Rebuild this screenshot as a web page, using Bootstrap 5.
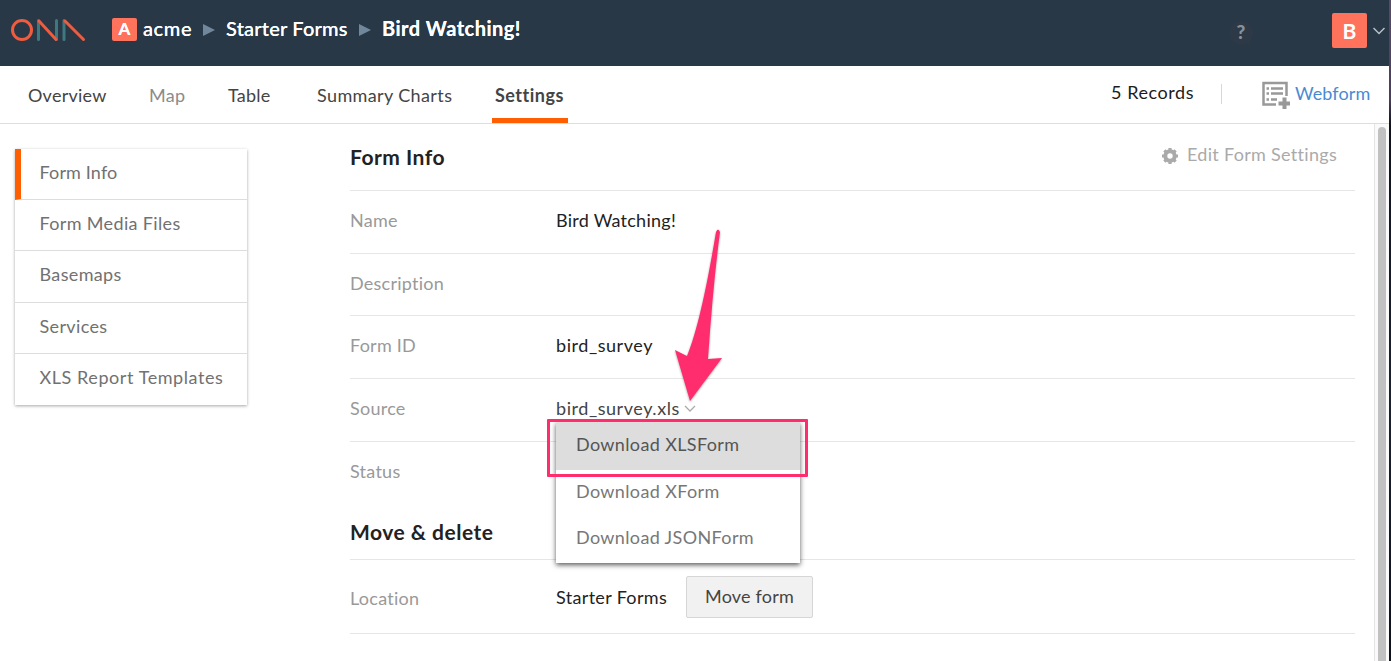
<!DOCTYPE html>
<html lang="en">
<head>
<meta charset="utf-8">
<title>Bird Watching! – Settings</title>
<link href="https://cdn.jsdelivr.net/npm/bootstrap@5.3.0/dist/css/bootstrap.min.css" rel="stylesheet">
<style>
body{font-family:Lato,"Liberation Sans",sans-serif;font-size:18px;line-height:24px;letter-spacing:.25px;font-variant-ligatures:none;color:#222;background:#fff;overflow:hidden;height:661px}
a{text-decoration:none;color:inherit}
.window{width:1389px;height:661px}
.desktop-edge{width:2px;background:linear-gradient(#5a4a68 0,#4b3d5c 100px,#10131e 125px,#1b2130 400px,#0d111c)}
.topbar{height:66px;background:#293847;color:#fff;padding:0 4px 0 10px}
.brand{width:76px;height:24px;margin-top:-7px}
.brand,.topbar svg{flex-shrink:0}
.crumbs{height:24px;margin:-10px 0 0 26px;font-size:20px;font-weight:500;letter-spacing:.2px;white-space:nowrap;text-shadow:0 0 .5px #fff}
.crumbs svg{position:relative;top:2px}
.tile{background:#ff735c;color:#fff;font-weight:700;border-radius:2px;letter-spacing:0;display:flex;align-items:center;justify-content:center;flex-shrink:0}
.tile-sm{width:25px;height:23px;font-size:17px;margin:2px 6px 0 0}
.tile-lg{width:35px;height:35px;font-size:21px;margin:-5px 6px 0 78px}
.crumb-org{width:60px;letter-spacing:.6px}
.crumb-project{width:144px;padding-left:11px}
.crumb-form{padding-left:11px;letter-spacing:.5px}
.tabbar{height:58px;border-bottom:1px solid #ddd;padding:0 17px 0 25px}
.tabs{gap:37px;height:57px}
.tabs a{padding:17px 3px 0;color:#444;border-bottom:5px solid transparent;white-space:nowrap;height:57px}
.tabs a.on{font-weight:700;letter-spacing:.5px;border-color:#ff5f00}
.w1{width:84px}.w2{width:42px}.w3{width:52px}.w4{width:141px;letter-spacing:.38px}.w5{width:76px}
.records{margin-top:-5px;letter-spacing:.55px;color:#1c1c1c}
.divide{width:1px;height:20px;background:#d8d8d8;margin:-2px 40px 0 27px}
.webform{color:#4a8ad4;margin:-4px 0 0 5px;width:77px;letter-spacing:.1px}
.sidemenu{width:232px;margin:25px 0 0 15px;box-shadow:0 1px 3px rgba(0,0,0,.35);color:#717171;height:256px;letter-spacing:.35px}
.sidemenu a{height:51.3px;padding:11px 0 0 24.5px;border-bottom:1px solid #ddd;white-space:nowrap}
.sidemenu a.on{border-left:6px solid #ff5f00;padding-left:18.5px;letter-spacing:.15px}
.sidemenu a:last-child{border-bottom:0;letter-spacing:.57px}
.info{width:1005px;margin-left:103px}
.line{border-bottom:1px solid #e6e6e6;height:63px;position:relative;display:flex}
.line>*{padding-top:17px;white-space:nowrap}
.short{height:62px}
.short>*{padding-top:16.5px}
.label{width:206px;color:#999}
.ident{letter-spacing:.55px}
.sec{font-size:21px;font-weight:700;letter-spacing:.5px;border-bottom:1px solid #e6e6e6;white-space:nowrap}
.sec-first{height:67px;padding:21px 18px 0 0}
.edit{font-size:18px;color:#aaa;margin-top:-3px}
.edit svg{margin:5px 8px 0 0}
.menu-box{position:absolute;left:206px;top:43px;width:244px;height:141px;padding:0;background:#fff;box-shadow:0 2px 5px rgba(0,0,0,.65);color:#777;z-index:2;letter-spacing:.36px}
.menu-box a{display:block;height:46px;padding:9px 0 0 20px}
.menu-box a:first-child{background:#ddd;color:#555;height:48px;padding-top:10px}
.mark-box{position:absolute;left:197px;top:40px;width:261px;height:58px;padding:0;border:3px solid #ff2d6e;z-index:3;border-radius:1px}
.arrow{position:absolute;left:315px;top:-154px;padding:0;z-index:3;filter:drop-shadow(0 1px 1px rgba(0,0,0,.35))}
.btn.move{height:42px;width:127px;margin:16px 0 0 19px;padding:0 0 2px;font-size:18px;letter-spacing:.2px;color:#444;background:#f1f1f1;border:1px solid #d6d6d6;border-radius:2px}
.status-line{height:63px;padding-top:17px}
.sec-second{height:55px;padding-top:15px}
.location{height:74px}
.location>span{padding-top:26px}
.location>.place{width:111px;padding-top:25px;letter-spacing:.33px}
.track{width:15px;border-left:1px solid #e4e4e4;background:#fafafa;padding:3px 0 0 3px}
.thumb{width:8px;height:560px;background:#c1c1c1;border-radius:4px}
</style>
</head>
<body class="d-flex">
<div class="window d-flex flex-column flex-shrink-0">
  <header class="topbar d-flex align-items-center flex-shrink-0">
    <svg class="brand" viewBox="0 0 76 24" fill="none" stroke-width="3" stroke-linecap="round"><circle cx="12" cy="12" r="9.5" stroke="#f15b3e"/><path d="M28.5 2.5V21.5M46.500 2.500V21.500M54 2.500V21.500" stroke="#3f7980"/><path d="M29 3L46 21.500M55 3L73.500 21.500" stroke="#f15b3e"/></svg>
    <nav class="crumbs d-flex align-items-center">
      <span class="tile tile-sm">A</span><a class="crumb-org" href="#">acme</a>
      <svg width="12" height="14"><path d="M0 1L12 7L0 13z" fill="#71879b"/></svg>
      <a class="crumb-project" href="#">Starter Forms</a>
      <svg width="12" height="14"><path d="M0 1L12 7L0 13z" fill="#71879b"/></svg>
      <b class="crumb-form">Bird Watching!</b>
    </nav>
    <svg class="ms-auto" width="26" height="26"><path d="M13 1a12 12 0 1 0 5 23l5 2-1-5A12 12 0 0 0 13 1z" fill="#2d3946"/><text x="13" y="19" text-anchor="middle" font-size="19" font-weight="900" fill="#87919a">?</text></svg>
    <span class="tile tile-lg">B</span>
    <svg width="12" height="10" fill="none" stroke="#b9c0c6" stroke-width="1.500" style="margin-top:-4px"><path d="M.5 2l5.500 5.500L11.500 2"/></svg>
  </header>
  <nav class="tabbar d-flex flex-shrink-0">
    <div class="tabs d-flex"><a class="w1" href="#">Overview</a><a class="w2" href="#"><span style="color:#8b8b8b">Map</span></a><a class="w3" href="#">Table</a><a class="w4" href="#">Summary Charts</a><a class="w5 on" href="#">Settings</a></div>
    <div class="ms-auto d-flex align-items-center"><span class="records">5 Records</span><i class="divide"></i>
      <svg width="28" height="28" fill="none" stroke="#999" stroke-width="2.500"><path d="M14 23.500H1.500V2H24.500V15"/><path d="M9 7.500H21M9 12.500H21M9 18.500H15" stroke-width="2.500"/><path d="M4.500 7.500h2.500M4.500 12.500h2.500M4.500 18.500h2.500" stroke-width="2.500"/><path d="M22.500 16.500v11.500M16.500 22.500h11.500" stroke-width="4"/></svg>
      <a href="#" class="webform">Webform</a></div>
  </nav>
  <main class="d-flex flex-grow-1 overflow-hidden">
    <nav class="sidemenu d-flex flex-column flex-shrink-0"><a class="on" href="#">Form Info</a><a href="#">Form Media Files</a><a href="#">Basemaps</a><a href="#">Services</a><a href="#">XLS Report Templates</a></nav>
    <section class="info">
      <div class="sec sec-first d-flex justify-content-between"><span>Form Info</span>
        <a href="#" class="edit d-flex fw-normal"><svg width="18" height="18" viewBox="0 0 18 18"><circle cx="9" cy="9" r="4.700" fill="none" stroke="#aaa" stroke-width="4"/><path d="M9 1v3M9 14v3M1 9h3M14 9h3M3.400 3.400l2 2M12.600 12.600l2 2M3.400 14.600l2-2M12.600 5.400l2-2" stroke="#aaa" stroke-width="3.200"/></svg><span style="letter-spacing:.3px">Edit Form Settings</span></a></div>
      <div class="line"><span class="label">Name</span><span>Bird Watching!</span></div>
      <div class="line short"><span class="label">Description</span></div>
      <div class="line"><span class="label">Form ID</span><span class="ident">bird_survey</span></div>
      <div class="line"><span class="label">Source</span><a href="#" class="ident" style="color:#444">bird_survey.xls <svg width="12" height="8" fill="none" stroke="#aaa" stroke-width="1.300" style="margin:-3px 0 0 -1px"><path d="M1 1l5 5L11 1"/></svg></a>
        <div class="menu-box"><a href="#">Download XLSForm</a><a href="#">Download XForm</a><a href="#">Download JSONForm</a></div>
        <div class="mark-box"></div>
        <svg class="arrow" width="65" height="180" viewBox="665 225 65 180"><path d="M716 232Q718 227 720 232Q713 285 708 359L722 358L690 401L675 350L687 356C698 330 708 280 716 232z" fill="#ff2d6e"/></svg>
      </div>
      <div class="status-line"><span class="label">Status</span></div>
      <div class="sec sec-second">Move &amp; delete</div>
      <div class="line location"><span class="label">Location</span><span class="place">Starter Forms</span><button class="btn move">Move form</button></div>
    </section>
    <div class="track ms-auto flex-shrink-0"><div class="thumb"></div></div>
  </main>
</div>
<div class="desktop-edge flex-shrink-0"></div>
<script src="https://cdn.jsdelivr.net/npm/bootstrap@5.3.0/dist/js/bootstrap.bundle.min.js"></script>
</body>
</html>
